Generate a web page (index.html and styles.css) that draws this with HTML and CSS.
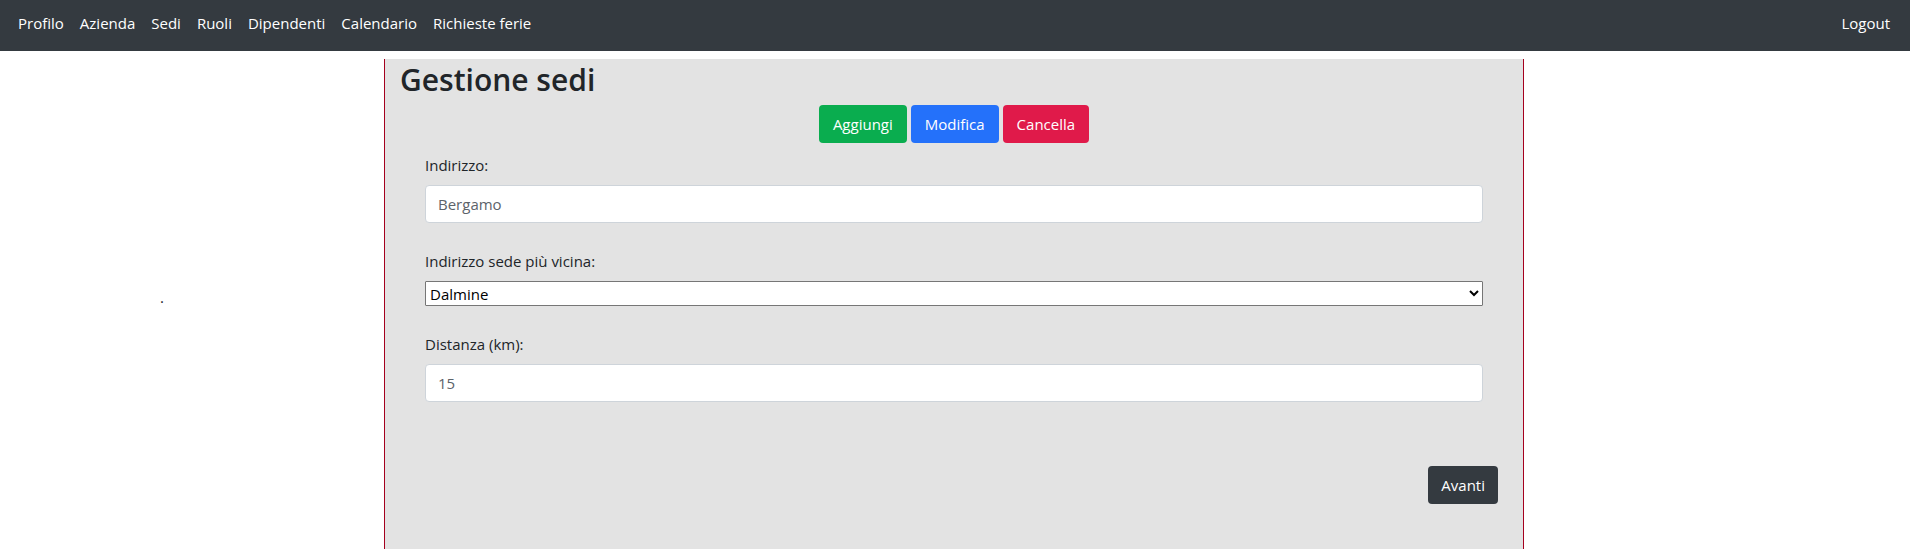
FILE: index.html
```html
<!DOCTYPE html>
<html lang="it">
<head>
<meta charset="utf-8">
<meta name="viewport" content="width=device-width, initial-scale=1">
<title>Gestione sedi</title>
<link rel="stylesheet" href="styles.css">
</head>
<body>
<nav class="navbar">
  <a href="#">Profilo</a>
  <a href="#">Azienda</a>
  <a href="#">Sedi</a>
  <a href="#">Ruoli</a>
  <a href="#">Dipendenti</a>
  <a href="#">Calendario</a>
  <a href="#">Richieste ferie</a>
  <a class="logout" href="#">Logout</a>
</nav>
<div class="page">
  <aside class="side">.</aside>
  <main class="panel">
    <h2 class="title">Gestione sedi</h2>
    <div class="actions">
      <button class="btn btn-add" type="button">Aggiungi</button>
      <button class="btn btn-edit" type="button">Modifica</button>
      <button class="btn btn-delete" type="button">Cancella</button>
    </div>
    <form class="form">
      <div class="fields">
        <div class="field">
          <label for="indirizzo">Indirizzo:</label>
          <input class="input" id="indirizzo" type="text" placeholder="Bergamo">
        </div>
        <div class="field">
          <label for="vicina">Indirizzo sede più vicina:</label>
          <select class="select" id="vicina"><option>Dalmine</option></select>
        </div>
        <div class="field">
          <label for="distanza">Distanza (km):</label>
          <input class="input" id="distanza" type="text" placeholder="15">
        </div>
      </div>
      <button class="btn btn-next" type="button">Avanti</button>
    </form>
  </main>
</div>
</body>
</html>
```
FILE: styles.css
```css
* { box-sizing: border-box; }
body {
  margin: 0;
  min-height: 100vh;
  display: flex;
  flex-direction: column;
  background: #fff;
  color: #212529;
  font: 15px/24px "Open Sans", "Noto Sans", sans-serif;
}
.navbar {
  display: flex;
  gap: 16px;
  padding: 11px 20px 16px 18px;
  background: #343a40;
}
.navbar a { color: #fff; text-decoration: none; }
.navbar .logout { margin-left: auto; }
.page {
  flex: 1;
  display: grid;
  grid-template-columns: 1fr minmax(0, 1140px) 1fr;
  padding: 8px 2px 0 0;
}
.side {
  align-self: center;
  padding: 0 60px 14px 0;
  text-align: center;
}
.panel {
  padding: 0 15px 45px;
  background: #e3e3e3;
  border: solid #a5001e;
  border-width: 0 1px;
}
.title { margin: 0 0 4px; font-size: 30px; line-height: 42px; font-weight: 600; }
.actions { display: flex; justify-content: center; gap: 4px; }
.btn {
  height: 38px;
  padding: 0 13px;
  border: 0;
  border-radius: 4px;
  color: #fff;
  font: inherit;
  cursor: pointer;
}
.actions .btn { padding: 0 14px; }
.btn-add { background: #0aad4f; }
.btn-edit { background: #2471fa; }
.btn-delete { background: #e01a4a; }
.btn-next { background: #343a40; margin: 64px 10px 0 0; }
.form { display: flex; flex-direction: column; align-items: flex-end; padding-top: 10px; }
.fields { width: 100%; padding: 0 25px; display: grid; gap: 26px; }
.field { display: grid; gap: 8px; }
.input {
  width: 100%;
  height: 38px;
  padding: 0 12px;
  border: 1px solid #ced4da;
  border-radius: 4px;
  background: #fff;
  font: inherit;
}
.input::placeholder { color: #5c636a; opacity: 1; }
.select {
  width: 100%;
  height: 25px;
  padding: 0;
  border: 1px solid #767676;
  border-radius: 1px;
  background: #fff;
  color: #000;
  font: inherit;
}
```
